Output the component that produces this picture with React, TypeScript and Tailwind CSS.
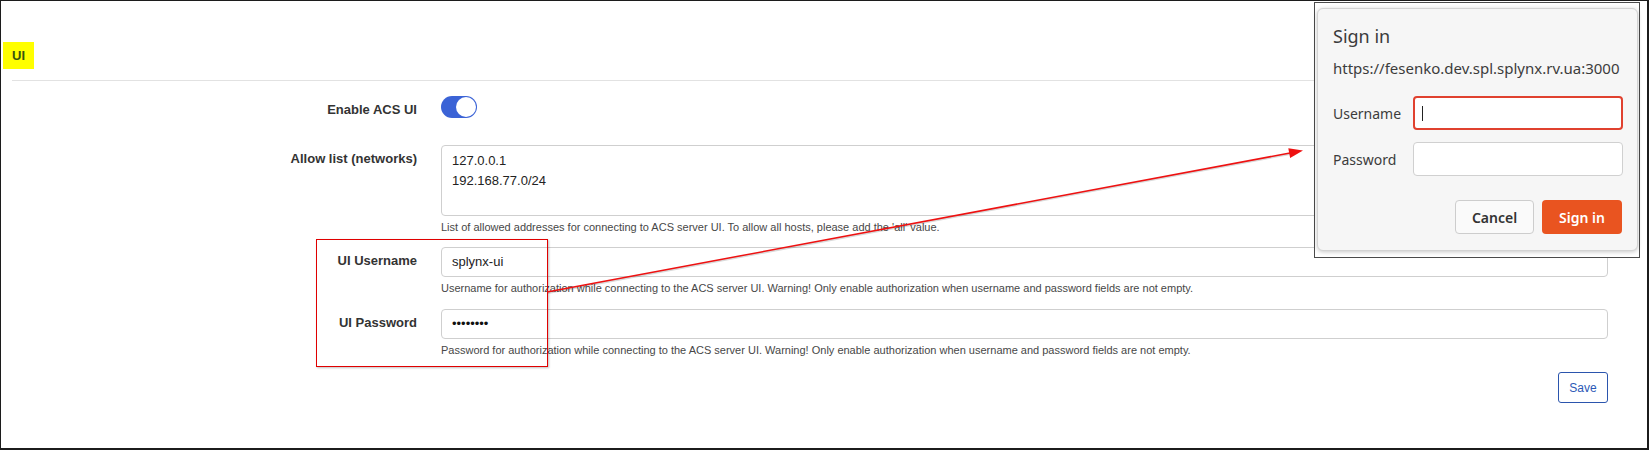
import type { ReactNode } from "react";

type RowProps = {
  label: string;
  children: ReactNode;
  className?: string;
};

function FormRow({ label, children, className = "" }: RowProps) {
  return (
    <div className={`flex items-start ${className}`}>
      <div className="mt-[4px] w-[416px] shrink-0 text-right text-[13px] font-bold leading-[20px] text-[#333]">
        {label}
      </div>
      <div className="ml-[24px] min-w-0 flex-1">{children}</div>
    </div>
  );
}

function Help({ children }: { children: ReactNode }) {
  return <p className="mt-[3px] text-[11px] leading-[16px] text-[#474747]">{children}</p>;
}

function SignInDialog() {
  return (
    <div className="absolute left-[1313px] top-[1px] h-[256px] w-[326px] border border-[#4a4a4a] bg-white pb-[6px] pl-[2px] pr-px pt-[5px]">
      <div className="h-full rounded-[6px] border border-[#d3d3d3] bg-[#f6f6f6] pl-[15px] pr-[14px] pt-[15px] font-['Noto_Sans',sans-serif] text-[#3c3c3c] shadow-[0_1px_4px_rgba(0,0,0,0.22)]">
        <p className="text-[18px] leading-[24px]">Sign in</p>
        <p className="mt-[10px] text-[15px] leading-[20px]">https://fesenko.dev.spl.splynx.rv.ua:3000</p>

        <div className="mt-[18px] flex items-center">
          <span className="w-[80px] shrink-0 text-[14px]">Username</span>
          <div className="flex h-[34px] flex-1 items-center rounded-[4px] border-2 border-[#e0412f] bg-white pl-[7px]">
            <span className="h-[15px] w-px bg-[#222]" />
          </div>
        </div>

        <div className="mt-[12px] flex items-center">
          <span className="w-[80px] shrink-0 text-[14px]">Password</span>
          <div className="h-[34px] flex-1 rounded-[4px] border border-[#d0d0d0] bg-white" />
        </div>

        <div className="mr-px mt-[24px] flex justify-end gap-[8px]">
          <button className="h-[34px] w-[79px] rounded-[4px] border border-[#cdcdcd] bg-[#fafafa] text-[14px] font-semibold text-[#333]">
            Cancel
          </button>
          <button className="h-[34px] w-[80px] rounded-[4px] bg-[#e95420] text-[14px] font-semibold text-white">
            Sign in
          </button>
        </div>
      </div>
    </div>
  );
}

export default function App() {
  return (
    <div className="relative h-[450px] w-[1649px] overflow-hidden border-b-2 border-l border-r-2 border-t border-[#1c1c1c] bg-white font-['Liberation_Sans',Arial,sans-serif] text-[#333]">
      <div className="pr-[39px]">
        {/* section header */}
        <div className="ml-[2px] mt-[41px] flex h-[27px] w-[31px] items-center justify-center bg-[#ffff00] text-[13px] font-bold text-[#37520f]">
          UI
        </div>
        <div className="ml-[11px] mt-[11px] h-px bg-[#e2e2e2]" />

        <FormRow label="Enable ACS UI" className="mt-[15px]">
          <div className="flex h-[22px] w-[36px] items-center justify-end rounded-full bg-[#3b63d6] px-px">
            <span className="h-[20px] w-[20px] rounded-full bg-white" />
          </div>
        </FormRow>

        <FormRow label="Allow list (networks)" className="mt-[25px]">
          <div className="h-[71px] rounded-[4px] border border-[#cfcfcf] pl-[10px] pt-[5px] text-[13px] leading-[20px] text-[#222]">
            <div>127.0.0.1</div>
            <div>192.168.77.0/24</div>
          </div>
          <Help>List of allowed addresses for connecting to ACS server UI. To allow all hosts, please add the 'all' value.</Help>
        </FormRow>

        <FormRow label="UI Username" className="mt-[12px]">
          <div className="flex h-[30px] items-center rounded-[4px] border border-[#cfcfcf] pl-[10px] text-[13px] text-[#222]">
            splynx-ui
          </div>
          <Help>
            Username for authorization while connecting to the ACS server UI. Warning! Only enable authorization when username and password fields are not empty.
          </Help>
        </FormRow>

        <FormRow label="UI Password" className="mt-[13px]">
          <div className="flex h-[30px] items-center rounded-[4px] border border-[#cfcfcf] pl-[10px] text-[13px] text-[#111]">
            ••••••••
          </div>
          <Help>
            Password for authorization while connecting to the ACS server UI. Warning! Only enable authorization when username and password fields are not empty.
          </Help>
        </FormRow>

        <div className="mt-[14px] flex justify-end">
          <button className="h-[31px] w-[50px] rounded-[3px] border border-[#2b55ad] text-[12px] text-[#2c59b6]">
            Save
          </button>
        </div>
      </div>

      {/* annotation: box around credentials */}
      <div className="absolute left-[315px] top-[238px] h-[128px] w-[232px] border border-[#e00000] shadow-[1px_1px_2px_rgba(0,0,0,0.25)]" />

      {/* annotation: arrow */}
      <svg className="pointer-events-none absolute -left-px -top-px" width={1649} height={450}>
        <line x1={548} y1={293} x2={1290} y2={154} stroke="rgba(0,0,0,0.15)" strokeWidth={2} />
        <line x1={547} y1={292} x2={1290} y2={153} stroke="#ee1111" strokeWidth={1.5} />
        <polygon points="1303,150.5 1290.1,158 1288.3,148.2" fill="#ee1111" />
      </svg>

      <SignInDialog />
    </div>
  );
}
